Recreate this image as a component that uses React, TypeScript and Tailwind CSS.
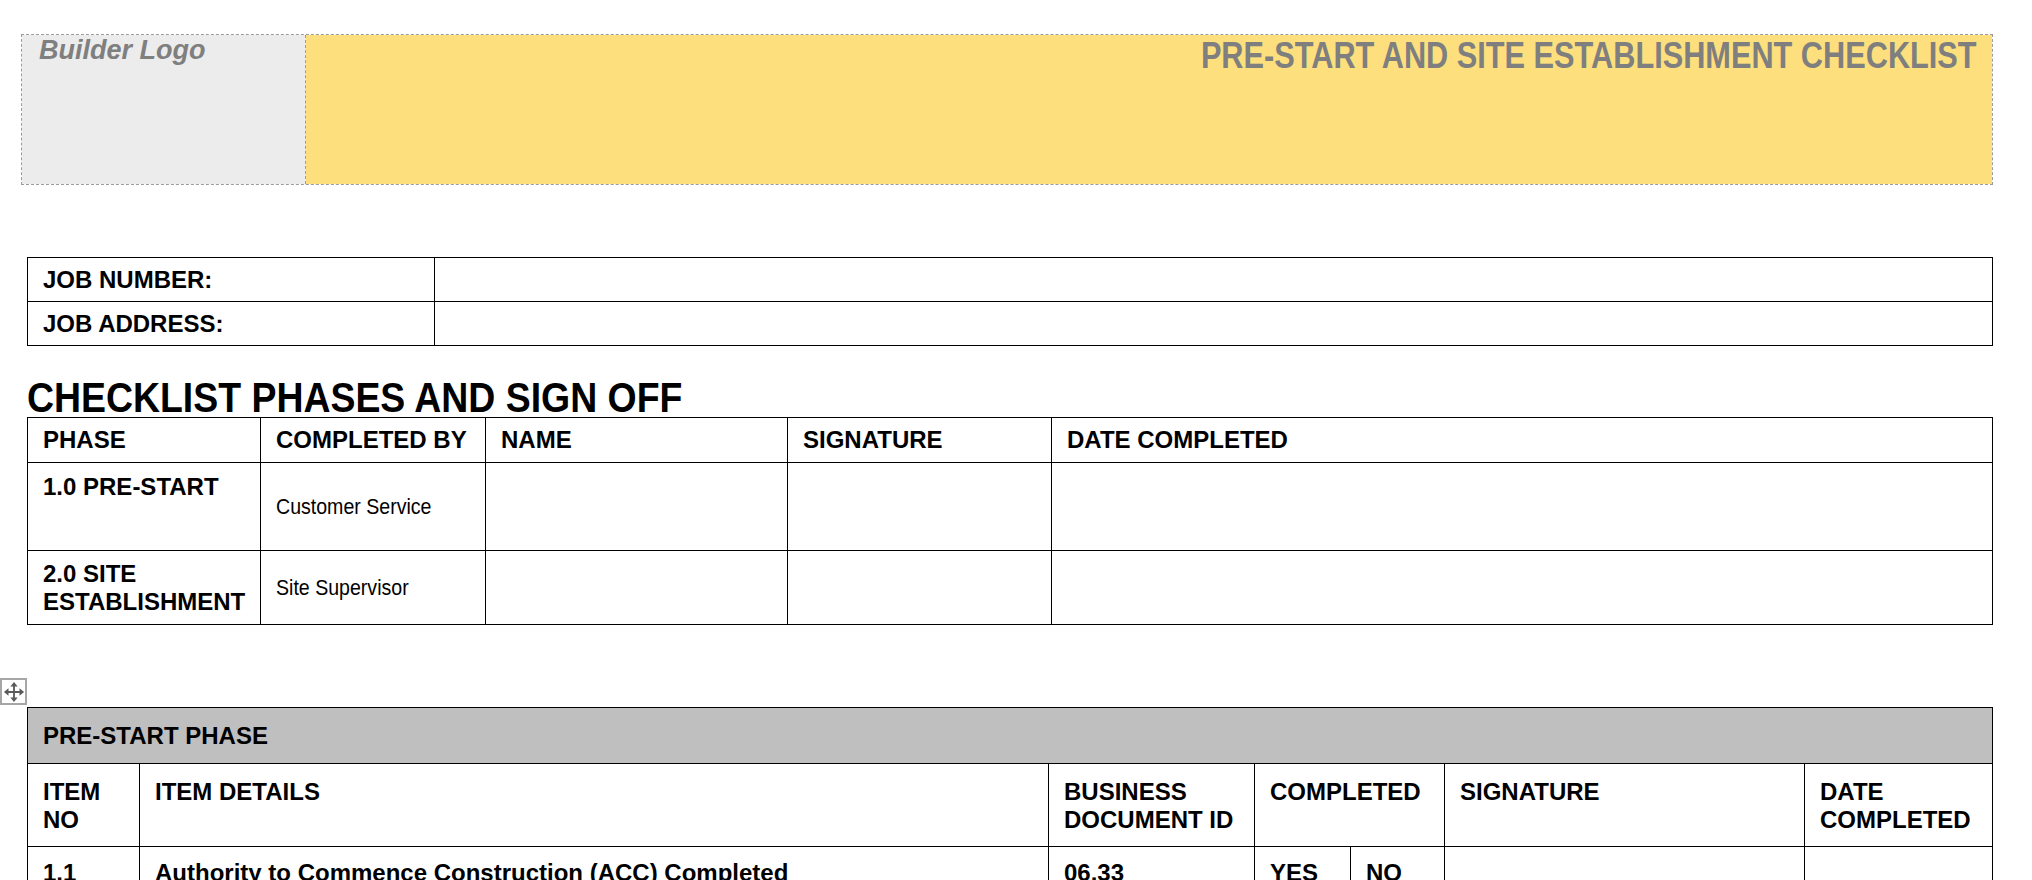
import { ReactNode } from "react"

const cellBase = "border border-black px-[15px] text-[24px] font-bold leading-[28px]"

function Cell({
  children,
  className = "",
  colSpan,
}: {
  children?: ReactNode
  className?: string
  colSpan?: number
}) {
  return (
    <td colSpan={colSpan} className={`${cellBase} ${className}`}>
      {children}
    </td>
  )
}

// narrow regular text, like Arial Narrow in the document
function Narrow({ children }: { children: ReactNode }) {
  return (
    <span className="inline-block origin-left scale-x-[0.91] whitespace-nowrap text-[21.5px] font-normal">
      {children}
    </span>
  )
}

function MoveHandle() {
  return (
    <div className="absolute left-[-27px] top-[-29px] flex h-[27px] w-[27px] items-center justify-center border-2 border-[#a6a6a6] bg-white">
      <svg viewBox="0 0 24 24" width="22" height="22">
        <path d="M12 4v16M4 12h16" stroke="#5a5a5a" strokeWidth="2" />
        <path
          d="M12 1l-4 5h8z M12 23l-4-5h8z M1 12l5-4v8z M23 12l-5-4v8z"
          fill="#5a5a5a"
        />
      </svg>
    </div>
  )
}

function App() {
  return (
    <div className="min-h-screen bg-white pl-[21px] pr-[39px] pt-[34px] font-['Liberation_Sans',Arial,sans-serif] text-black">
      <header className="flex h-[151px] border border-dashed border-[#9b9b9b]">
        <div className="w-[284px] shrink-0 border-r border-dashed border-[#9b9b9b] bg-[#ececec] pl-[17px]">
          <span className="text-[27px] font-bold italic leading-[30px] text-[#7f7f7f]">
            Builder Logo
          </span>
        </div>
        <div className="flex-1 bg-[#fddf7e] pr-[15px] text-right">
          <h1 className="text-[37px] font-bold leading-[42px] text-[#7f7f7f]">
            <span className="inline-block origin-right scale-x-[0.83] whitespace-nowrap">
              PRE-START AND SITE ESTABLISHMENT CHECKLIST
            </span>
          </h1>
        </div>
      </header>

      <div className="ml-[6px]">
        <table className="mt-[72px] w-[1966px] table-fixed border-collapse">
          <colgroup>
            <col className="w-[407px]" />
            <col />
          </colgroup>
          <tbody>
            <tr className="h-[44px]">
              <Cell className="px-[14px]">JOB NUMBER:</Cell>
              <Cell />
            </tr>
            <tr className="h-[44px]">
              <Cell className="px-[14px]">JOB ADDRESS:</Cell>
              <Cell />
            </tr>
          </tbody>
        </table>

        <h2 className="mt-[31px] text-[43px] font-bold leading-[40px]">
          <span className="inline-block origin-left scale-x-[0.87] whitespace-nowrap">
            CHECKLIST PHASES AND SIGN OFF
          </span>
        </h2>

        <table className="w-[1966px] table-fixed border-collapse">
          <colgroup>
            <col className="w-[233px]" />
            <col className="w-[225px]" />
            <col className="w-[302px]" />
            <col className="w-[264px]" />
            <col />
          </colgroup>
          <tbody>
            <tr className="h-[45px]">
              <Cell>PHASE</Cell>
              <Cell>COMPLETED BY</Cell>
              <Cell>NAME</Cell>
              <Cell>SIGNATURE</Cell>
              <Cell>DATE COMPLETED</Cell>
            </tr>
            <tr className="h-[88px]">
              <Cell className="pt-[10px] align-top">1.0 PRE-START</Cell>
              <Cell>
                <Narrow>Customer Service</Narrow>
              </Cell>
              <Cell />
              <Cell />
              <Cell />
            </tr>
            <tr className="h-[74px]">
              <Cell>
                2.0 SITE
                <br />
                ESTABLISHMENT
              </Cell>
              <Cell>
                <Narrow>Site Supervisor</Narrow>
              </Cell>
              <Cell />
              <Cell />
              <Cell />
            </tr>
          </tbody>
        </table>

        <div className="relative mt-[82px]">
          <MoveHandle />
          <table className="w-[1966px] table-fixed border-collapse">
            <colgroup>
              <col className="w-[112px]" />
              <col className="w-[909px]" />
              <col className="w-[206px]" />
              <col className="w-[96px]" />
              <col className="w-[94px]" />
              <col className="w-[360px]" />
              <col />
            </colgroup>
            <tbody>
              <tr className="h-[56px] bg-[#bfbfbf]">
                <Cell colSpan={7}>PRE-START PHASE</Cell>
              </tr>
              <tr className="h-[83px]">
                <Cell className="pt-[14px] align-top">
                  ITEM
                  <br />
                  NO
                </Cell>
                <Cell className="pt-[14px] align-top">ITEM DETAILS</Cell>
                <Cell className="pt-[14px] align-top">
                  BUSINESS
                  <br />
                  DOCUMENT ID
                </Cell>
                <Cell colSpan={2} className="pt-[14px] align-top">
                  COMPLETED
                </Cell>
                <Cell className="pt-[14px] align-top">SIGNATURE</Cell>
                <Cell className="pt-[14px] align-top">
                  DATE
                  <br />
                  COMPLETED
                </Cell>
              </tr>
              <tr className="h-[70px]">
                <Cell className="pt-[12px] align-top">1.1</Cell>
                <Cell className="pt-[12px] align-top">
                  Authority to Commence Construction (ACC) Completed
                </Cell>
                <Cell className="pt-[12px] align-top">06.33</Cell>
                <Cell className="pt-[12px] align-top">YES</Cell>
                <Cell className="pt-[12px] align-top">NO</Cell>
                <Cell />
                <Cell />
              </tr>
            </tbody>
          </table>
        </div>
      </div>
    </div>
  )
}

export default App
